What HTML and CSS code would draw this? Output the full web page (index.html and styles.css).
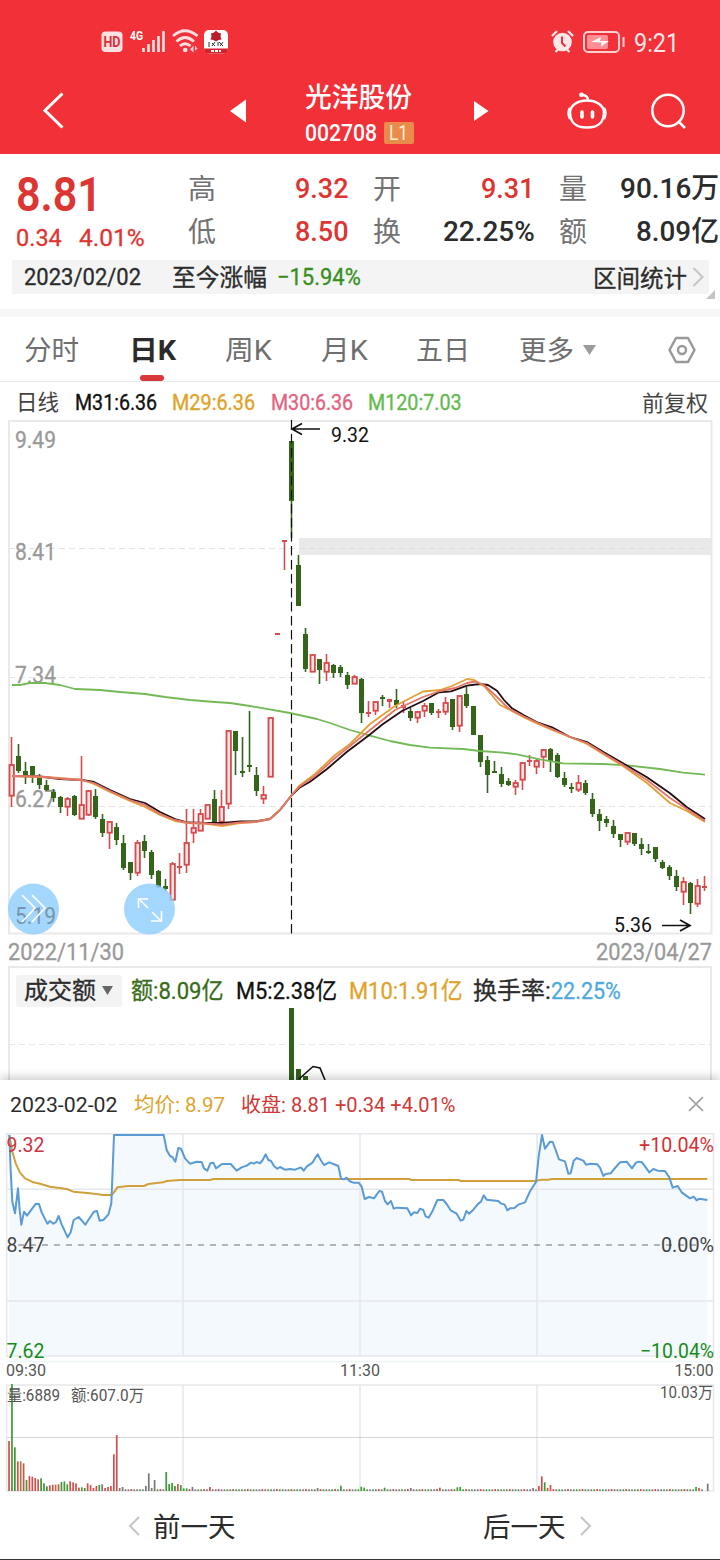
FILE: index.html
```html
<!DOCTYPE html>
<html lang="zh-CN">
<head>
<meta charset="utf-8">
<title>光洋股份 002708</title>
<link rel="stylesheet" href="styles.css">
</head>
<body>
<header class="top">
  <div class="status">
    <svg class="status-left" width="128" height="26" viewBox="101 29 128 26">
      <rect x="101.500" y="31.500" width="21" height="20.500" rx="4" fill="#fde0e2"/>
      <text x="103.500" y="47" font-size="14" font-weight="700" fill="#d92f39" textLength="17" lengthAdjust="spacingAndGlyphs">HD</text>
      <text x="130" y="39.500" font-size="12" font-weight="700" fill="#fff" textLength="13" lengthAdjust="spacingAndGlyphs">4G</text>
      <path d="M143.500 48v4M148.500 44v8M153.500 40v12M158.500 36v16M163.500 31v21" stroke="#ffe1e3" stroke-width="2.600"/>
      <g fill="none" stroke="#ffe1e3" stroke-width="2.800">
        <path d="M173 36Q185 25.500 197.500 36M176.500 41.500Q185 33.500 194 41.500M180 46Q185 41.500 190.500 46"/>
      </g>
      <circle cx="185.300" cy="50" r="2.300" fill="#ffe1e3"/>
      <path d="M190 49.500l3.500-4v7zM195 50.500v-5l2.500 3.200z" fill="#ffd0d3"/>
      <rect x="204" y="30" width="24" height="23.500" rx="5" fill="#fff"/>
      <path d="M204 48.500h24q0 5-5 5h-14q-5 0-5-5z" fill="#d3222b"/>
      <path d="M216 30.500l2 2 3 1-.5 3 1 3-3 .5-2.500 1.500-2.500-1.500-3-.5 1-3-.5-3 3-1z" fill="#b91f2b"/>
      <path d="M209 42v5M212 43l3 3M215 42l-3 4M218 42v4M219 42l4 4M223 42l-3 4" stroke="#333" stroke-width="1"/>
      <path d="M211 51h10" stroke="#fff" stroke-width="2" stroke-dasharray="3 1"/>
    </svg>
    <div class="status-right">
      <svg width="76" height="26" viewBox="550 29 76 26">
        <circle cx="562.500" cy="42" r="9.300" fill="#ffe6e7"/>
        <path d="M552 36l5-5M573 36l-5-5M555.500 52l3-3M569.500 52l-3-3" stroke="#ffe6e7" stroke-width="2.400"/>
        <path d="M562 36.500v6.500l3.500 3.500" stroke="#f23038" stroke-width="2" fill="none"/>
        <rect x="584" y="32" width="35" height="20" rx="4" fill="none" stroke="#ffd0d2" stroke-width="2"/>
        <rect x="587" y="35" width="21" height="14" rx="2" fill="#ff8f94"/>
        <path d="M591 42l10-5-1 4h9l-8 5.500.500-4z" fill="#fff"/>
        <path d="M623.500 37v10" stroke="#ffd0d2" stroke-width="2"/>
      </svg>
      <span class="fit clock" data-w="45">9:21</span>
    </div>
  </div>
  <nav class="nav">
    <svg class="nav-back" width="24" height="40" viewBox="41 91 24 40"><path d="M62.500 93.500L45 110.500l17.500 17" fill="none" stroke="#fff" stroke-width="3"/></svg>
    <svg class="nav-prev" width="16" height="24" viewBox="230 99 16 24"><path d="M230 111l16-11.500v23z" fill="#fff"/></svg>
    <div class="title">
      <div class="fit name" data-w="107">光洋股份</div>
      <div class="code"><span class="fit" data-w="72">002708</span><b class="level"><span class="fit" data-w="19">L1</span></b></div>
    </div>
    <svg class="nav-next" width="15" height="22" viewBox="474 100 15 22"><path d="M488.500 111l-14.500-10v20z" fill="#fff"/></svg>
    <svg class="nav-robot" width="42" height="40" viewBox="566 91 42 40">
      <g fill="none" stroke="#fff" stroke-width="2.500">
        <path d="M587 100.500c10 0 16 5 17 11 0 11-5 16-17 16s-17-5-17-16c1-6 7-11 17-11z"/>
        <path d="M570 108q-3 5 0 11M604 108q3 5 0 11M588 100q0-4-5-5"/>
      </g>
      <circle cx="581.500" cy="94.800" r="2.400" fill="#fff"/>
      <path d="M582 112v5M592.500 112v5" stroke="#fff" stroke-width="3.600" stroke-linecap="round"/>
    </svg>
    <svg class="nav-search" width="38" height="38" viewBox="649 92 38 38"><circle cx="668" cy="110.500" r="15.700" fill="none" stroke="#fff" stroke-width="2.500"/><path d="M678 121l7 7" stroke="#fff" stroke-width="2.500"/></svg>
  </nav>
</header>

<section class="quote">
  <div class="quote-main">
    <div class="price">
      <div class="fit last" data-w="86">8.81</div>
      <div class="change"><span class="fit" data-w="46">0.34</span><span class="fit" data-w="66">4.01%</span></div>
    </div>
    <dl class="stats">
      <dt>高</dt><dd class="up"><span class="fit" data-w="54">9.32</span></dd>
      <dt>开</dt><dd class="up"><span class="fit" data-w="54">9.31</span></dd>
      <dt>量</dt><dd><span class="fit" data-w="99">90.16万</span></dd>
      <dt>低</dt><dd class="up"><span class="fit" data-w="54">8.50</span></dd>
      <dt>换</dt><dd><span class="fit" data-w="92">22.25%</span></dd>
      <dt>额</dt><dd><span class="fit" data-w="83">8.09亿</span></dd>
    </dl>
  </div>
  <div class="range">
    <span class="fit" data-w="117">2023/02/02</span>
    <span class="fit since" data-w="95">至今涨幅</span>
    <span class="fit down" data-w="84">−15.94%</span>
    <span class="fit range-link" data-w="94">区间统计</span>
    <svg width="12" height="22" viewBox="0 0 12 22"><path d="M1.500 2l9 9-9 9" fill="none" stroke="#c4c4c4" stroke-width="2"/></svg>
  </div>
  <svg class="corner" width="9" height="9" viewBox="0 0 9 9"><path d="M9 0v9H0z" fill="#c4c4c4"/></svg>
</section>

<nav class="tabs">
  <span class="tab fit" data-w="55">分时</span>
  <span class="tab active"><span class="fit" data-w="47">日K</span></span>
  <span class="tab fit" data-w="47">周K</span>
  <span class="tab fit" data-w="47">月K</span>
  <span class="tab fit" data-w="54">五日</span>
  <span class="tab fit" data-w="55">更多</span>
  <svg class="more" width="13" height="10" viewBox="0 0 13 10"><path d="M0 0h13L6.500 10z" fill="#9b9b9b"/></svg>
  <svg class="settings" width="28" height="28" viewBox="0 0 28 28"><path d="M8 2h12l6.500 12L20 26H8L1.500 14z" fill="none" stroke="#999" stroke-width="2.500" stroke-linejoin="round"/><circle cx="14" cy="14" r="4" fill="none" stroke="#999" stroke-width="2.400"/></svg>
</nav>

<div class="legend">
  <span class="fit dim" data-w="43">日线</span>
  <span class="fit m31" data-w="82">M31:6.36</span>
  <span class="fit m29" data-w="83">M29:6.36</span>
  <span class="fit m30" data-w="82">M30:6.36</span>
  <span class="fit m120" data-w="94">M120:7.03</span>
  <span class="fit adjust" data-w="66">前复权</span>
</div>

<svg class="kline" width="720" height="514" viewBox="0 420 720 514">
  <g stroke="#e3e3e3" stroke-dasharray="6 4"><path d="M9 548.500h703M9 677.500h703M9 806.500h703"/></g>
  <rect x="299" y="538" width="413" height="17" fill="#e9e9e9"/>
  <path d="M299 548.500h413" stroke="#dedede" stroke-dasharray="6 4"/>
  <rect x="9" y="421" width="702.500" height="512.500" fill="none" stroke="#e9e9e9" stroke-width="2"/>
  <g class="axis">
    <text x="15" y="448" textLength="41">9.49</text>
    <text x="15" y="560" textLength="41">8.41</text>
    <text x="15" y="683" textLength="41">7.34</text>
    <text x="15" y="807" textLength="41">6.27</text>
  </g>
  <g id="candles"></g>
  <path class="line ma-long" d="M12 685H20L30 683H45L60 685 75 689 100 690 120 692 145 694 165 697 190 700 215 702 230 703 250 706 290 713 317 719 330 723 350 730 370 735.700 390 741 410 745 430 747.700 463 749 480 751 503 752.700 517 754.300 540 759.300 563 763.300 603 764 627 765.300 660 769 683 772.700 705 774.700"/>
  <path class="line ma-black" d="M12 776L40 776.500 60 779 82 780 94 782 110 790 130 799 145 803 160 812 175 819 188 822.500 205 823 222 823 240 821.500 255 821.500 270 819 280 810 291 796 299 788 310 781.700 327 769 347 751.700 368 736 383 724 402 711 423 701 439 692.300 451 691.300 467 685.700 480 684 488 685 497 690.700 504 700 512 708.300 523 714.700 538 722.700 552 727.300 570 737 587 742 603 751.700 623 763.300 647 777.300 670 793.300 687 807.300 705 819"/>
  <path class="line ma-yellow" d="M12 776L40 777 60 778 82 780 94 784 110 792 130 801 145 807 160 815 175 821 188 823 205 823.500 222 826 240 823 255 822 270 819 280 810 291 796 299 786 315 774 335 755 350 744 370 724 395 706 423 691.500 440 690 452 686 467 679 474 680 485 687 500 705 510 710 523 717 538 724 552 730 570 737 587 744 603 754 623 766 647 783 670 803 687 811 705 822"/>
  <path class="line ma-pink" d="M12 776L40 776.500 60 778.500 82 780 94 783 110 791 130 800 145 805 160 814 175 820 188 823 205 823.500 222 824.500 240 822.500 255 822 270 819 280 810 291 796 299 787 315 776 335 758 350 746 370 730 395 710 423 697 440 691 455 688 467 683 476 681.500 484 685 496 696 508 708 523 716 538 723 552 729 570 737 587 743 603 753 623 765 647 780 670 798 687 809 705 821"/>
  <path d="M291.500 420v514" stroke="#111" stroke-width="1.200" stroke-dasharray="9.500 4.500"/>
  <g fill="none" stroke="#111" stroke-width="1.700"><path d="M320 429h-28M302 423.500l-10 5.500 10 5.500M662 925.500h28M680 920l10 5.500-10 5.500"/></g>
  <g class="mark"><text x="331" y="442" textLength="38">9.32</text><text x="614" y="932" textLength="38">5.36</text></g>
  <g class="float-button">
    <circle cx="33.500" cy="909" r="25.500"/><circle cx="149.500" cy="909" r="25.500"/>
    <text x="15" y="924" textLength="41">5.19</text>
    <path d="M22 895l13 13-13 14M32 895l13 13-13 14"/>
    <path stroke-width="2.800" d="M148 908l-9-9M138.500 908v-9h9.500M152 912l9 9M151 921h10.500v-10"/>
  </g>
</svg>

<div class="dates"><span class="fit" data-w="116">2022/11/30</span><span class="fit" data-w="116">2023/04/27</span></div>

<section class="turnover">
  <div class="turnover-head">
    <span class="picker"><span class="fit" data-w="72">成交额</span><svg width="11" height="9" viewBox="0 0 11 9"><path d="M0 0h11L5.500 9z" fill="#666"/></svg></span>
    <span class="fit amount" data-w="93">额:8.09亿</span>
    <span class="fit m5" data-w="101">M5:2.38亿</span>
    <span class="fit m10" data-w="114">M10:1.91亿</span>
    <span class="fit" data-w="78">换手率:</span><span class="fit rate" data-w="70">22.25%</span>
  </div>
  <svg class="turnover-chart" width="702" height="73" viewBox="9 1008 702 73">
    <path d="M9 1044.500h702" stroke="#e7e7e7" stroke-dasharray="6 4"/>
    <path d="M289 1008h5v73h-5zM296 1069h5v12h-5zM303 1076h5v5h-5z" fill="#33611a"/>
    <path d="M299 1079l14-12.500 7 1.500 5 12" fill="none" stroke="#111" stroke-width="1.600"/>
  </svg>
</section>

<section class="sheet">
  <div class="sheet-head">
    <span class="fit" data-w="108">2023-02-02</span>
    <span class="fit avg" data-w="91">均价: 8.97</span>
    <span class="fit close" data-w="214">收盘: 8.81 +0.34 +4.01%</span>
    <svg width="16" height="16" viewBox="0 0 16 16"><path d="M1 1l14 14M15 1L1 15" stroke="#999" stroke-width="1.600"/></svg>
  </div>
  <svg class="intraday" width="720" height="365" viewBox="0 1130 720 365">
    <path id="area" fill="#f4f9fd"/>
    <g fill="none" stroke="#e4e8ec" stroke-width="1.500">
      <path d="M6.700 1133.800H713.500V1356H6.700zM183 1134v222M360 1134v222M537 1134v222M7 1189.300h706M7 1301h706"/>
      <path d="M7 1361.500h706" stroke="#edf4f5"/>
      <path d="M6.700 1385H713.500V1491H6.700zM183 1385v106M360 1385v106M537 1385v106" stroke="#e8e8e8"/>
      <path d="M7 1437.500h706" stroke="#d4d4d4" stroke-width="1"/>
    </g>
    <path d="M18 1245h684" stroke="#9b9fa5" stroke-width="1.600" stroke-dasharray="6 6"/>
    <path id="average" class="line" stroke="#d1a03a"/>
    <path id="price" class="line" stroke="#5a9ad5"/>
    <g id="bars"></g>
    <g class="scale">
      <text x="6.500" y="1151.500" textLength="38" fill="#cf3444">9.32</text>
      <text x="6.500" y="1251.500" textLength="38" fill="#444">8.47</text>
      <text x="6.500" y="1357.500" textLength="38" fill="#168c1c">7.62</text>
      <text x="639" y="1151.500" textLength="75" fill="#d32f35">+10.04%</text>
      <text x="661" y="1251.500" textLength="53" fill="#444">0.00%</text>
      <text x="640" y="1357.500" textLength="74" fill="#168c1c">−10.04%</text>
    </g>
    <g class="small">
      <text x="6" y="1376" textLength="40">09:30</text><text x="340" y="1376" textLength="40">11:30</text><text x="674.500" y="1376" textLength="39">15:00</text>
      <text x="7" y="1400.500" textLength="53">量:6889</text><text x="71" y="1400.500" textLength="73">额:607.0万</text><text x="660" y="1397.500" textLength="53">10.03万</text>
    </g>
  </svg>
  <footer class="pager">
    <span class="previous"><svg width="11" height="20" viewBox="0 0 11 20"><path d="M10 1l-9 9 9 9" fill="none" stroke="#c5c5c5" stroke-width="2"/></svg><span class="fit" data-w="83">前一天</span></span>
    <span class="following"><span class="fit" data-w="83">后一天</span><svg width="11" height="20" viewBox="0 0 11 20"><path d="M1 1l9 9-9 9" fill="none" stroke="#c5c5c5" stroke-width="2"/></svg></span>
  </footer>
</section>
<script src="charts.js"></script>
</body>
</html>
```
FILE: styles.css
```css
* { box-sizing: border-box; }
body { margin: 0; width: 720px; height: 1560px; overflow: hidden; background: #fff; color: #2c2c2c; font-family: Roboto, "Noto Sans CJK SC", sans-serif; }
svg { display: block; flex: none; overflow: visible; }
text { font-family: Roboto, "Noto Sans CJK SC", sans-serif; }
.fit { display: block; flex: none; white-space: nowrap; }
.fit > i { display: inline-block; font-style: normal; transform-origin: 0 50%; }

.top { height: 154px; background: #f23038; color: #fff; }
.status { display: flex; justify-content: space-between; padding: 29px 41px 0 101px; height: 68px; }
.status-right { display: flex; gap: 8px; }
.clock { font-size: 25px; line-height: 29px; color: #ffe6e7; }
.nav { display: flex; align-items: center; height: 86px; padding-left: 41px; }
.nav-prev { margin-left: 165px; }
.title { margin-left: 59px; width: 110px; height: 86px; padding-top: 12px; }
.name { font-size: 27px; line-height: 36px; height: 34px; font-weight: 500; }
.code { display: flex; align-items: center; gap: 7px; height: 36px; font-size: 23.500px; font-weight: 500; line-height: 36px; margin-top: 1px; }
.level { width: 30px; height: 22px; padding-left: 5px; border-radius: 2px; background: #e98b4a; color: #fff0d8; font-size: 20px; font-weight: 400; line-height: 23px; }
.nav-next { margin-left: 59px; }
.nav-robot { margin-left: 77px; }
.nav-search { margin-left: 41px; }

.quote { height: 163px; border-bottom: 8px solid #f6f6f6; }
.quote-main { display: flex; height: 106px; padding-top: 13px; }
.price { width: 188px; padding-left: 16px; color: #dc3532; }
.last { font-size: 49px; line-height: 56px; font-weight: 600; }
.change { display: flex; gap: 17px; font-size: 24.500px; line-height: 29px; -webkit-text-stroke: .3px; }
.stats { display: grid; grid-template-columns: 28px 157px 28px 158px 28px 132px; grid-template-rows: 43px 43px; margin: 0; line-height: 43px; }
.stats dt { padding-top: 1px; color: #727272; font-size: 28px; }
.stats dd { display: flex; justify-content: flex-end; margin: 0; font-weight: 500; font-size: 28.500px; }
.stats dd:nth-of-type(3n+1) { padding-right: 24px; }
.stats dd:nth-of-type(3n+2) { padding-right: 24px; }
.stats .up { color: #dc3532; }
.range { display: flex; align-items: center; height: 34px; margin: 0 11px 0 12px; padding: 0 5px 0 12px; background: #f4f4f4; font-size: 23.500px; line-height: 34px; -webkit-text-stroke: .3px; }
.since { margin-left: 31px; padding-top: 1px; }
.down { margin-left: 10px; color: #368f1c; }
.range-link { margin-left: auto; margin-right: 5px; padding-top: 3px; }
.corner { margin: -4px 5px 0 auto; }

.tabs { display: flex; align-items: center; height: 65px; padding: 0 24px; border-bottom: 1px solid #e8e8e8; font-size: 27px; line-height: 64px; color: #6f6f6f; }
.tab { height: 64px; padding-top: 2px; }
.tab + .tab { margin-left: 49px; }
.tab.active { position: relative; margin-left: 50px; color: #2b2b2b; font-weight: 700; }
.tab.active::after { content: ""; position: absolute; left: 11px; bottom: 0; width: 24px; height: 6px; border-radius: 3px; background: #d9383a; }
.tab:nth-child(5) { margin-left: 48px; }
.more { margin: 1px 0 0 9px; }
.settings { margin: 2px 0 0 auto; }

.legend { display: flex; align-items: center; height: 38px; padding: 3px 12px 0 16px; font-size: 22px; line-height: 38px; -webkit-text-stroke: .35px; }
.legend .dim, .adjust { color: #444; -webkit-text-stroke: 0; }
.legend .adjust { padding-top: 2px; }
.m31 { margin-left: 16px; color: #111; }
.m29 { margin-left: 15px; color: #dfa329; }
.m30 { margin-left: 16px; color: #e3637f; }
.m120 { margin-left: 15px; color: #64b94e; }
.adjust { margin-left: auto; }

.axis { fill: #999; font-size: 23px; stroke: #999; stroke-width: .3px; }
.mark { fill: #111; font-size: 21px; }
.line { fill: none; stroke-width: 2; stroke-linejoin: round; }
.ma-long { stroke: #73ba57; }
.ma-black { stroke: #220c10; }
.ma-yellow { stroke: #e2a03a; }
.ma-pink { stroke: #e27668; }
.kline .line { stroke-width: 1.800; }
.float-button circle { fill: #8dcdfd; opacity: .8; }
.float-button text { fill: #7895ac; font-size: 23px; }
.float-button path { fill: none; stroke: #fff; stroke-width: 1.600; }
.dates { display: flex; justify-content: space-between; height: 32px; padding: 0 8px; color: #999; font-size: 23.500px; line-height: 36px; -webkit-text-stroke: .3px; }

.turnover { height: 114px; margin: 0 8px; border: 2px solid #e9e9e9; border-bottom: 0; }
.turnover-head { display: flex; align-items: center; height: 40px; padding: 5px 0 0 6px; font-size: 24px; line-height: 34px; -webkit-text-stroke: .3px; }
.picker { display: flex; align-items: center; gap: 6px; width: 106px; height: 32px; margin-right: 9px; padding-left: 8px; border-radius: 3px; background: #f3f3f3; }
.amount { margin-right: 12px; color: #386c18; }
.m5 { margin-right: 12px; color: #111; }
.m10 { margin-right: 10px; color: #e0a32b; }
.rate { color: #4ea9dd; }
.turnover-chart { margin-left: -1px; }

.sheet { position: relative; height: 480px; border-bottom: 1.500px solid #333; background: #fff; box-shadow: 0 -3px 9px rgba(0, 0, 0, .2); }
.sheet-head { display: flex; align-items: center; height: 50px; padding: 0 16px 0 10px; font-size: 20.500px; line-height: 52px; }
.avg { margin-left: 16px; color: #dda42e; }
.close { margin-left: 16px; color: #ce3836; }
.sheet-head svg { margin: -2px 0 0 auto; }
.scale { font-size: 20px; }
.small { font-size: 16px; fill: #555; }
.pager { display: flex; height: 64px; padding: 0 0 0 129px; font-size: 27.500px; line-height: 62px; }
.previous, .following { display: flex; align-items: center; gap: 13px; height: 62px; }
.pager .fit { padding-top: 4px; }
.following { margin-left: 247px; gap: 14px; }
```
FILE: charts.js
```js
// Condense each label to its own column width.
document.querySelectorAll('.fit').forEach(function (el) {
  var w = +el.dataset.w, inner = document.createElement('i');
  inner.textContent = el.textContent;
  el.textContent = '';
  el.appendChild(inner);
  el.style.width = w + 'px';
  inner.style.transform = 'scaleX(' + w / inner.offsetWidth + ')';
});
document.querySelectorAll('text[textLength]').forEach(function (t) {
  t.setAttribute('lengthAdjust', 'spacingAndGlyphs');
});

// Daily candles: colour, body top, body bottom, wick top, wick bottom.
var days = 'r765 796 737 807,g756 771 744 773,g771 776 762 784,g766 775 766 783,g777 785 774 789,g785 790 780 791,g792 798 789 802,g797 807 796 813,r799 807 797 816,g796 815 795 816,r805 819 756 819,r791 815 790 816,g796 817 789 819,g819 833 814 837,r822 833 821 849,g827 840 823 845,g843 868 835 870,g862 873 862 880,r843 873 840 876,g841 851 835 858,g852 875 850 879,g871 887 870 888,g886 889 879 891,r864 900 862 900,r866 868 853 874,r843 865 809 873,r828 833 809 843,r814 831 809 831,r805 819 805 819,g799 822 790 822,r807 822 790 822,r731 804 731 809,g731 751 731 775,g771 773 737 777,g765 767 711 772,g775 791 767 796,r795 799 786 804,r718 777 718 777,r633 635 633 635,r540 542 540 570,g441 501 441 538,g565 606 555 606,g634 669 628 672,r655 672 655 672,g659 670 659 684,r663 672 654 681,g665 673 664 678,g667 673 665 677,g675 685 672 689,r677 684 675 684,g679 713 678 723,r712 714 701 717,r702 711 701 715,g697 699 695 706,r699 702 699 708,g700 705 689 708,r705 708 701 713,g711 718 708 721,r712 718 711 723,r706 711 703 717,g703 713 703 715,r711 713 709 718,r703 712 697 715,g699 727 699 730,r696 726 696 732,g694 706 687 708,g706 735 706 735,g735 762 735 767,g760 775 756 793,g771 773 761 773,g774 784 767 787,g781 785 778 786,r783 787 780 795,r763 780 762 790,r760 762 755 766,r761 767 759 774,r750 757 749 768,g749 761 748 772,g755 777 753 778,g778 785 772 787,g787 789 783 793,r783 790 775 792,g783 793 780 795,g799 814 793 817,g814 821 809 831,g819 823 816 827,g826 834 820 838,g834 840 834 847,r833 842 832 845,g833 844 833 846,g844 849 838 855,g851 853 844 854,g847 859 847 862,g862 868 860 869,g867 876 865 880,g876 887 870 891,r882 892 877 905,g883 903 882 914,r886 904 879 907,r886 888 876 891';
document.getElementById('candles').innerHTML = days.split(',').map(function (d, i) {
  var v = d.slice(1).split(' ').map(Number), x = 11.5 + 7 * i, red = d[0] === 'r', c = red ? '#d64a4d' : '#35651b';
  var hollow = red && v[1] - v[0] > 3;
  var s = '<path d="M' + x + ' ' + v[2] + 'V' + v[3] + '" stroke="' + c + '" stroke-width="1.6"/>';
  return s + (hollow
    ? '<rect x="' + (x - 2) + '" y="' + v[0] + '" width="4.400" height="' + (v[1] - v[0] - .3) + '" fill="#fde3e1" stroke="' + c + '" stroke-width="1.800"/>'
    : '<rect x="' + (x - 2.5) + '" y="' + v[0] + '" width="5" height="' + Math.max(2, v[1] - v[0]) + '" fill="' + c + '"/>');
}).join('');

// Intraday curves, in thirds of a pixel.
function curve(s) {
  return s.split(' ').map(function (p) {
    var q = p.split(',');
    return (q[0] / 3).toFixed(2) + ' ' + (1120 + q[1] / 3).toFixed(2);
  }).join('L');
}
var price = curve('28,45 32,150 37,245 45,280 54,205 59,270 64,314 72,275 81,287 103,257 108,251 117,252 125,277 142,311 150,303 160,311 168,306 176,288 185,313 203,352 212,337 221,300 236,291 244,300 256,314 265,300 282,275 291,273 299,302 310,300 325,284 334,250 342,45 491,45 500,90 510,108 517,111 526,125 535,84 543,86 555,115 570,131 590,125 605,126 612,145 622,152 631,130 640,128 648,145 666,132 692,132 710,152 725,142 740,137 753,128 762,131 770,126 780,130 788,120 797,103 805,120 813,123 822,138 832,146 840,141 855,149 870,147 885,149 903,142 911,152 920,140 937,128 953,103 962,120 972,135 988,127 1000,132 1015,138 1023,175 1032,178 1040,173 1048,183 1060,188 1076,188 1085,200 1094,237 1107,231 1122,235 1138,213 1146,215 1155,243 1163,253 1173,243 1181,266 1190,263 1222,265 1233,286 1242,277 1252,279 1260,266 1270,270 1277,289 1286,293 1298,272 1312,240 1330,240 1340,252 1352,271 1370,281 1382,302 1390,299 1399,273 1407,281 1420,269 1435,251 1443,245 1451,226 1460,239 1495,243 1502,250 1514,254 1522,271 1530,265 1543,264 1555,254 1575,247 1590,214 1608,186 1616,110 1626,45 1635,86 1650,65 1658,66 1667,90 1677,118 1695,124 1705,161 1712,160 1721,122 1730,114 1750,122 1758,134 1772,131 1792,133 1800,143 1810,168 1817,162 1832,160 1845,144 1860,127 1880,125 1896,145 1908,128 1915,125 1926,127 1935,139 1948,157 1960,147 1973,152 1995,153 2008,172 2018,203 2033,198 2045,217 2070,235 2081,230 2090,241 2098,236 2122,240');
document.getElementById('price').setAttribute('d', 'M' + price);
document.getElementById('area').setAttribute('d', 'M9 1356L' + price + 'V1356Z');
document.getElementById('average').setAttribute('d', 'M' + curve('28,45 37,95 47,130 60,158 75,175 100,187 120,191 150,200 200,207 220,215 270,220 310,225 335,225 342,217 352,202 385,198 432,198 445,192 490,187 500,183 540,180 630,180 640,177 1230,177 1232,180 1378,180 1380,183 1605,183 1625,179 1645,179 1655,177 2122,177'));

// Minute volume: the busy minutes carry a colour and height, the rest are near zero.
var busy = {};
'r150 g321 g131 r89 o89 r83 g33 r45 r43 r39 r35 g38 g23 g14 r17 r19 o19 r20 g27 g29 g20 r29 r26 r23 r10 g11 g9 r23 r18 r9 r15 g18 k20 r9 r12 r15 r110 r168 k9 k12'.split(' ').forEach(function (v, i) { busy[i] = v; });
Object.assign(busy, {47: 'k15', 48: 'k53', 49: 'k9', 50: 'k33', 54: 'g57', 55: 'g21', 56: 'g24', 57: 'g15', 58: 'r21', 59: 'g18', 60: 'g8', 61: 'g8', 63: 'k12', 69: 'r12', 106: 'k9', 114: 'g16', 121: 'g13', 122: 'g10', 129: 'g10', 138: 'k9', 148: 'r10', 154: 'g11', 155: 'g12', 180: 'k9', 182: 'r15', 183: 'r44', 184: 'g26', 185: 'r9', 186: 'r18', 236: 'g12', 237: 'r9', 239: 'k0', 240: 'k22'});
var tones = {r: '#d34f4c', g: '#3d9b36', o: '#9b8044', k: '#777'}, bars = '';
for (var i = 0; i <= 240; i++) {
  var b = busy[i] || (i % 5 === 2 ? 'r6' : i % 3 ? 'k5' : 'g5'), h = b.slice(1) / 3;
  bars += '<rect x="' + (8.2 + 2.911 * i) + '" y="' + (1491 - h) + '" width="1.700" height="' + h + '" fill="' + tones[b[0]] + '"/>';
}
document.getElementById('bars').innerHTML = bars;
```
